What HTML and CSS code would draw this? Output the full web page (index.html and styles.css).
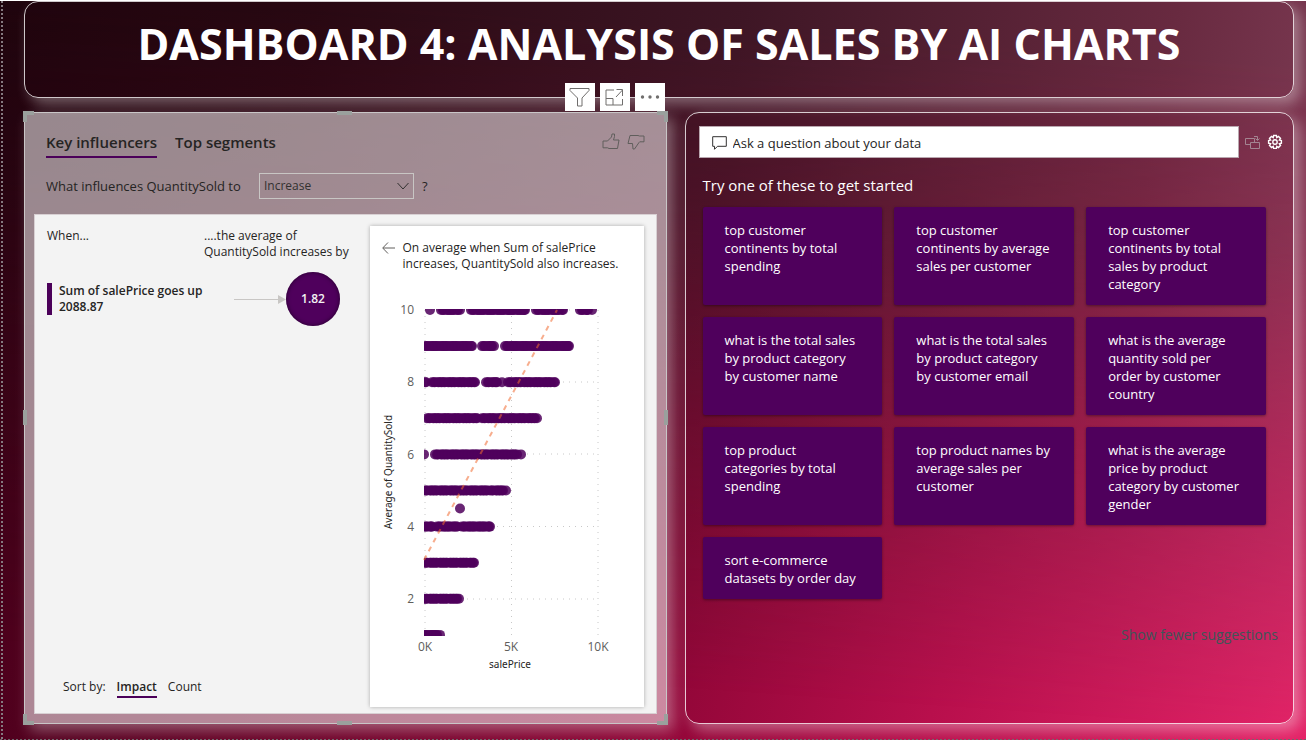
FILE: index.html
```html
<!DOCTYPE html>
<html lang="en">
<head>
<meta charset="utf-8">
<title>Dashboard 4: Analysis of sales by AI charts</title>
<link rel="stylesheet" href="styles.css">
</head>
<body>
<main class="page">
  <header class="banner"><h1>DASHBOARD 4: ANALYSIS OF SALES BY AI CHARTS</h1></header>

  <section class="panel influencers" aria-label="Key influencers">
    <div class="visual-tools">
      <button type="button" aria-label="Filters">
        <svg width="21" height="20" viewBox="0 0 21 20"><path d="M1 1.500h19v2l-7 7.500v8h-4.500v-8L1 3.500z"/></svg>
      </button>
      <button type="button" aria-label="Focus mode">
        <svg width="19" height="18" viewBox="0 0 19 18"><path d="M9 2H1v15h16.500v-6M1 10.500h7V17M11 9l6.500-7M11.500 1.500h6v6.500"/></svg>
      </button>
      <button type="button" aria-label="More options">
        <svg width="20" height="6" viewBox="0 0 20 6"><g class="dots"><circle cx="2.500" cy="3" r="1.700"/><circle cx="10" cy="3" r="1.700"/><circle cx="17.500" cy="3" r="1.700"/></g></svg>
      </button>
    </div>
    <i class="handle corner tl"></i><i class="handle corner tr"></i><i class="handle corner bl"></i><i class="handle corner br"></i>
    <i class="handle top"></i><i class="handle bottom"></i><i class="handle left"></i><i class="handle right"></i>

    <div class="tabs-row">
      <nav class="tabs">
        <button type="button" class="tab active">Key influencers</button>
        <button type="button" class="tab">Top segments</button>
      </nav>
      <div class="votes">
        <button type="button" aria-label="Like"><svg width="18" height="18" viewBox="0 0 18 18"><path d="M1 8h4.500l4-4 .5-3h2.500v2.500L11.500 7H17l-1.500 8.500H7l-1.500-.7H1z"/></svg></button>
        <button type="button" aria-label="Dislike"><svg width="18" height="18" viewBox="0 0 18 18"><path d="M3 2.500 1 10.500h4.500l.5 5.500h1.500L12 9.500l.7-.7H17V3h-4.500L11 2.500z"/></svg></button>
      </div>
    </div>

    <div class="question">
      <label for="direction">What influences QuantitySold to</label>
      <span class="select">
        <select id="direction"><option>Increase</option><option>Decrease</option></select>
        <svg width="12" height="8" viewBox="0 0 12 8"><path d="M.5 1 6 7l5.500-6"/></svg>
      </span>
      <span>?</span>
    </div>

    <div class="analysis">
      <div class="factors">
        <div class="factor-head"><span>When...</span><span>....the average of QuantitySold increases by</span></div>
        <button type="button" class="factor">
          <span class="factor-name">Sum of salePrice goes up 2088.87</span>
          <svg class="arrow" width="52" height="9" viewBox="0 0 52 9"><path class="shaft" d="M0 4.500h45"/><path class="tip" d="M44 0v9l8-4.500z"/></svg>
          <span class="bubble">1.82</span>
        </button>
        <div class="sort"><span>Sort by:</span><button type="button" class="active">Impact</button><button type="button">Count</button></div>
      </div>
      <article class="chart-card">
        <div class="chart-head">
          <button type="button" aria-label="Back"><svg width="13" height="12" viewBox="0 0 13 12"><path d="M13 6H1M6 .5.700 6 6 11.500"/></svg></button>
          <p>On average when Sum of salePrice increases, QuantitySold also increases.</p>
        </div>
        <svg class="chart" viewBox="0 0 274 395" role="img" aria-label="Scatter chart of average QuantitySold by salePrice">
          <defs><clipPath id="plot"><rect x="54" y="24" width="176" height="327"/></clipPath></defs>
          <g class="grid">
            <path d="M55 25V350M141.500 25V350M228 25V350M55 25H228M55 97H228M55 169H228M55 241.500H228M55 314H228"/>
          </g>
          <g id="dots" class="marks" clip-path="url(#plot)"></g>
          <path class="trend" d="M54 275 187 25"/>
          <g class="ticks">
            <g text-anchor="end">
              <text x="44" y="29">10</text><text x="44" y="101">8</text><text x="44" y="174">6</text><text x="44" y="246">4</text><text x="44" y="318">2</text>
            </g>
            <g text-anchor="middle"><text x="55" y="366">0K</text><text x="141" y="366">5K</text><text x="228" y="366">10K</text></g>
          </g>
          <g class="titles" text-anchor="middle">
            <text x="140" y="383">salePrice</text>
            <text transform="translate(22 187) rotate(-90)">Average of QuantitySold</text>
          </g>
        </svg>
      </article>
    </div>
  </section>

  <section class="panel qna" aria-label="Q&amp;A">
    <div class="ask">
      <div class="ask-box">
        <svg width="15" height="14" viewBox="0 0 15 14"><path d="M.7.700h13.600v9.600H5.500l-3 3v-3H.7z"/></svg>
        <input type="text" aria-label="Question" placeholder="Ask a question about your data">
      </div>
      <button type="button" class="convert" aria-label="Turn this result into a visual"><svg width="16" height="15" viewBox="0 0 16 15"><path d="M5 9.500H.5v-6h9V7M5.500 7.500h9v6h-9zM9 1.500h3.500V5M10.500 3.500l2 2 2-2"/></svg></button>
      <button type="button" class="settings" aria-label="Settings"><svg width="16" height="16" viewBox="0 0 16 15"><path d="M6.600 1h2.800l.4 2 1.700-1.100 2 2-1.100 1.700 2 .4v2.800l-2 .5 1.100 1.700-2 2-1.700-1.100-.4 2H6.600l-.4-2-1.700 1.100-2-2 1.100-1.700-2-.5V6l2-.4-1.100-1.700 2-2L6.200 3z"/><circle cx="8" cy="7.500" r="2.200"/></svg></button>
    </div>
    <h2>Try one of these to get started</h2>
    <div class="suggestions">
      <button type="button">top customer continents by total spending</button>
      <button type="button">top customer continents by average sales per customer</button>
      <button type="button">top customer continents by total sales by product category</button>
      <button type="button">what is the total sales by product category by customer name</button>
      <button type="button">what is the total sales by product category by customer email</button>
      <button type="button">what is the average quantity sold per order by customer country</button>
      <button type="button">top product categories by total spending</button>
      <button type="button">top product names by average sales per customer</button>
      <button type="button">what is the average price by product category by customer gender</button>
      <button type="button">sort e-commerce datasets by order day</button>
    </div>
    <a class="fewer" href="#">Show fewer suggestions</a>
  </section>
</main>
<script src="chart.js"></script>
</body>
</html>
```
FILE: styles.css
```css
* { box-sizing: border-box; }
body {
  margin: 0;
  font-family: "Open Sans", "Noto Sans", sans-serif;
  font-size: 12px;
  line-height: 16px;
  color: #252423;
}
button, select, input { font: inherit; color: inherit; }
button { padding: 0; border: 0; background: none; cursor: pointer; }
svg { display: block; fill: none; stroke: currentColor; }
h1, h2, p { margin: 0; }

.page {
  position: relative;
  z-index: 0;
  min-height: 100vh;
  padding: 0 12px 17px 24px;
  border-top: 1px solid #fff;
  display: grid;
  grid-template: 97px 1fr / 642fr 609fr;
  gap: 14px 18px;
  overflow: hidden;
  background: linear-gradient(107deg, #40001a 0%, #4c001c 12%, #8c0535 55%, #b80f4c 75%, #e42468 100%);
}
.page::before, .page::after { content: ""; position: absolute; inset: 0; z-index: -1; pointer-events: none; }
.page::before {
  background: linear-gradient(100deg, #1e040d 0%, #280812 22%, #3e1625 52%, #682a40 82%, #84405a 100%);
  -webkit-mask-image: linear-gradient(184deg, #000 8%, rgba(0, 0, 0, .8) 30%, rgba(0, 0, 0, .42) 55%, transparent 88%);
  mask-image: linear-gradient(184deg, #000 8%, rgba(0, 0, 0, .8) 30%, rgba(0, 0, 0, .42) 55%, transparent 88%);
}
.page::after {
  background:
    repeating-linear-gradient(#857a80 0 2px, transparent 2px 4px) 1px 0 / 2px 100% no-repeat,
    repeating-linear-gradient(90deg, #6d6468 0 2px, transparent 2px 4px) 0 100% / 100% 2px no-repeat;
}

.banner, .panel {
  border: 1px solid rgba(255, 255, 255, .78);
  border-radius: 14px;
  box-shadow: 6px 6px 14px rgba(255, 255, 255, .36);
}
.banner { grid-column: 1 / -1; display: flex; justify-content: center; padding-top: 12px; }
h1 { font-size: 43px; line-height: 60px; font-weight: 700; color: #fff; white-space: nowrap; }

.panel { position: relative; min-width: 0; display: flex; flex-direction: column; }
.influencers { padding: 16px 9px 9px; border-radius: 0; border-color: #c9c6c7; background: rgba(255, 255, 255, .53); }

.visual-tools { position: absolute; right: 1px; bottom: 100%; display: flex; gap: 5px; padding-bottom: 2px; }
.visual-tools button { width: 30px; height: 28px; display: grid; place-items: center; background: #fff; color: #706e6d; }
.dots { fill: currentColor; stroke: none; }

.handle { position: absolute; background: #9aa09d; }
.handle.corner { width: 11px; height: 11px; border: 0 solid #9aa09d; background: none; }
.tl { left: -2px; top: -2px; }
.tr { right: -2px; top: -2px; }
.bl { left: -2px; bottom: -2px; }
.br { right: -2px; bottom: -2px; }
.handle.tl, .handle.tr { border-top-width: 4px; }
.handle.bl, .handle.br { border-bottom-width: 4px; }
.handle.tl, .handle.bl { border-left-width: 4px; }
.handle.tr, .handle.br { border-right-width: 4px; }
.handle.top, .handle.bottom { width: 15px; height: 4px; left: 50%; margin-left: -8px; }
.handle.left, .handle.right { width: 4px; height: 15px; top: 50%; margin-top: -8px; }
.handle.top { top: -2px; }
.handle.bottom { bottom: -2px; }
.handle.left { left: -2px; }
.handle.right { right: -2px; }

.tabs-row { display: flex; justify-content: space-between; padding: 0 12px; }
.tabs { display: flex; gap: 18px; }
.tab { height: 29px; font-size: 15px; line-height: 20px; padding-bottom: 2px; font-weight: 600; border-bottom: 2px solid transparent; }
.tab.active { border-color: #4b0059; }
.votes { display: flex; gap: 7px; color: #605e5c; }
.votes button { height: 26px; }
.question { display: flex; align-items: center; gap: 8px; padding: 15px 12px; font-size: 13px; }
.question label { flex: 0 0 205px; }
.select { position: relative; display: block; color: #323130; }
.select select { appearance: none; width: 155px; height: 26px; padding: 0 4px; border: 1px solid #c8c6c4; border-radius: 0; background: none; font-size: 12px; }
.select svg { position: absolute; right: 5px; top: 9px; pointer-events: none; }

.analysis { flex: 1; display: flex; gap: 8px; padding: 11px 12px 6px; background: #f3f3f3; border: 1px solid #d8d0d3; }
.factors { flex: 1; display: flex; flex-direction: column; padding-top: 2px; }
.factor-head { display: grid; grid-template-columns: 157px 1fr; }
.factor { display: flex; align-items: center; margin-top: 12px; text-align: left; }
.factor-name { width: 164px; padding-left: 7px; border-left: 5px solid #4b0059; font-weight: 600; }
.arrow { margin-left: 23px; stroke: none; color: #c8c6c4; }
.arrow .shaft { stroke: currentColor; }
.arrow .tip { fill: currentColor; }
.bubble { width: 54px; height: 54px; border-radius: 50%; display: grid; place-items: center; background: #4f005c; box-shadow: inset 0 0 4px #24002b; color: #f3f3f3; font-weight: 600; }
.sort { display: flex; gap: 11px; margin-top: auto; padding: 0 16px 9px; }
.sort button { padding-bottom: 1px; border-bottom: 2px solid transparent; }
.sort .active { font-weight: 600; border-color: #4b0059; }

.chart-card { width: 274px; display: flex; flex-direction: column; background: #fff; box-shadow: 0 0 4px rgba(0, 0, 0, .3); }
.chart-head { display: flex; gap: 8px; padding: 14px 12px 13px; }
.chart-head button { height: 16px; color: #605e5c; }
.chart { width: 100%; stroke: none; }
.grid { stroke: #c8c8c8; stroke-width: 1; stroke-dasharray: 1 5; fill: none; }
.marks { fill: #4f005c; fill-opacity: .85; }
.trend { stroke: #f0692f; stroke-opacity: .55; stroke-width: 2; stroke-dasharray: 5 5; }
.ticks { fill: #605e5c; font-size: 12px; }
.titles { fill: #252423; font-size: 10px; font-family: "Noto Sans", sans-serif; }

.qna { padding: 13px 10px 80px 13px; color: #fff; }
.ask { display: flex; align-items: center; gap: 6px; }
.ask-box { flex: 1; height: 32px; display: flex; align-items: center; gap: 6px; padding: 2px 12px 0; background: #fff; border: 1px solid #b9a7af; color: #323130; }
.ask-box input { flex: 1; min-width: 0; padding: 0; border: 0; outline: 0; background: none; font-size: 13px; }
.ask-box input::placeholder { color: #252423; opacity: 1; }
.convert { color: #a38491; }
.settings svg { stroke-width: 1.400; }
h2 { padding: 17px 4px 12px; font-size: 15px; line-height: 20px; font-weight: 400; }
.suggestions { display: grid; grid-template-columns: repeat(3, 1fr); gap: 12px; padding: 0 17px 0 4px; }
.suggestions button { display: flex; padding: 14px 22px 12px; border-radius: 2px; background: #4f005c; box-shadow: 0 1px 3px rgba(0, 0, 0, .4); font-size: 13px; line-height: 18px; text-align: left; }
.fewer { align-self: flex-end; margin-top: 28px; padding: 0 5px; color: #3e5658; font-size: 14px; text-decoration: none; }
```
FILE: chart.js
```js
// Runs of overlapping points for each QuantitySold value: [value, [[first x, last x], ...]].
const rows = [
  [10, [[60, 60], [71, 90], [101, 155], [166, 193], [210, 218], [222, 222]]],
  [9, [[55, 102], [112, 124], [135, 199]]],
  [8, [[55, 56], [62, 105], [116, 127], [132, 132], [138, 185]]],
  [7, [[57, 107], [112, 167]]],
  [6, [[54, 54], [65, 147], [151, 151]]],
  [5, [[54, 117], [120, 136]]],
  [4, [[54, 62], [67, 87], [92, 120]]],
  [3, [[54, 104]]],
  [2, [[54, 89]]],
  [1, [[54, 70]]],
  [4.5, [[90, 90]]]
];
const layer = document.getElementById("dots");
const spacing = [2, 1, 3, 1, 2, 1];

function addDot(x, y) {
  const dot = document.createElementNS("http://www.w3.org/2000/svg", "circle");
  dot.setAttribute("cx", x);
  dot.setAttribute("cy", y);
  dot.setAttribute("r", 5);
  layer.append(dot);
}

for (const [value, runs] of rows) {
  const y = 25 + (10 - value) * 36.1;
  for (const [first, last] of runs) {
    let step = 0;
    for (let x = first; x < last; x += spacing[step++ % spacing.length]) addDot(x, y);
    addDot(last, y);
  }
}
```
